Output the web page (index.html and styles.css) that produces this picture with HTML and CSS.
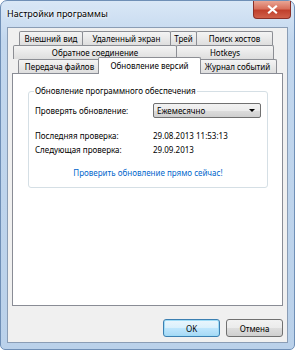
FILE: index.html
```html
<!DOCTYPE html>
<html lang="ru">
<head>
    <meta charset="UTF-8">
    <title>Настройки программы</title>
    <link rel="stylesheet" href="styles.css">
</head>
<body>
    <div class="window">

        <!-- Title bar -->
        <div class="titlebar">
            <span class="title">Настройки программы</span>
            <div class="close-btn">
                <svg width="11" height="9" viewBox="0 0 11 9">
                    <path d="M2 1.5 L9 7.5 M9 1.5 L2 7.5" stroke="#fff" stroke-width="2.2" stroke-linecap="square"/>
                </svg>
            </div>
        </div>

        <div class="client">

            <!-- Tabs -->
            <div class="tabs">
                <div class="tab-row row-1">
                    <div class="tab t-look">Внешний вид</div>
                    <div class="tab t-remote">Удаленный экран</div>
                    <div class="tab t-tray">Трей</div>
                    <div class="tab t-hosts">Поиск хостов</div>
                </div>
                <div class="tab-row row-2">
                    <div class="tab t-back">Обратное соединение</div>
                    <div class="tab t-keys">Hotkeys</div>
                </div>
                <div class="tab-row row-3">
                    <div class="tab t-files">Передача файлов</div>
                    <div class="tab t-update active">Обновление версий</div>
                    <div class="tab t-log">Журнал событий</div>
                </div>
            </div>

            <!-- Tab page -->
            <div class="panel">
                <fieldset class="group">
                    <legend>Обновление программного обеспечения</legend>

                    <div class="field">
                        <span class="label">Проверять обновление:</span>
                        <div class="combo">
                            <span>Ежемесячно</span>
                            <span class="arrow"></span>
                        </div>
                    </div>

                    <div class="field info first">
                        <span class="label">Последняя проверка:</span>
                        <span class="value">29.08.2013 11:53:13</span>
                    </div>
                    <div class="field info">
                        <span class="label">Следующая проверка:</span>
                        <span class="value">29.09.2013</span>
                    </div>

                    <a class="link" href="#">Проверить обновление прямо сейчас!</a>
                </fieldset>
            </div>

            <!-- Dialog buttons -->
            <div class="buttons">
                <button class="btn btn-default">OK</button>
                <button class="btn">Отмена</button>
            </div>

        </div>
    </div>
</body>
</html>
```

FILE: styles.css
```css
/* General */
body {
    margin: 0;
    background: #fff;
    font-family: "Noto Sans", "Open Sans", sans-serif;
    font-size: 8px;
    color: #000;
}

.window {
    box-sizing: border-box;
    width: 295px;
    height: 350px;
    display: flex;
    flex-direction: column;
    padding: 0 6px 6px;
    border: 1px solid #6f8fb6;
    border-radius: 7px 7px 5px 5px;
    background: linear-gradient(#d9e7f6, #c2d7ee 40px, #bad1ea);
}

/* Title bar */
.titlebar {
    height: 26px;
    display: flex;
    justify-content: space-between;
    align-items: flex-start;
    margin-right: -3px;
}

.title {
    margin: 6px 0 0;
    font-size: 9px;
    line-height: 14px;
    text-shadow: 0 0 5px #fff, 0 0 3px #fff;
}

.close-btn {
    width: 38px;
    height: 18px;
    box-sizing: border-box;
    display: flex;
    align-items: center;
    justify-content: center;
    border: 1px solid #8a3028;
    border-top: none;
    border-radius: 0 0 4px 4px;
    background: linear-gradient(#e9a594, #d8705c 45%, #c0402c 55%, #d0604a);
}

/* Client area */
.client {
    flex: 1;
    display: flex;
    flex-direction: column;
    padding: 3px 4px 0;
    border: 1px solid #8a9db5;
    background: #f0f0f0;
}

/* Tabs */
.tab-row {
    display: flex;
    height: 14px;
    align-items: flex-start;
}

.row-1 { margin-left: 7px; }
.row-2 { margin-left: 1px; }
.row-3 { margin-left: 6px; }

.tab {
    box-sizing: border-box;
    height: 14px;
    margin-left: -1px;
    border: 1px solid #8c8e94;
    border-bottom: none;
    border-radius: 2px 2px 0 0;
    background: linear-gradient(#f4f4f4, #e9e9e9 50%, #dedede);
    text-align: center;
    line-height: 13px;
    white-space: nowrap;
}

.tab:first-child { margin-left: 0; }

.tab.active {
    position: relative;
    z-index: 1;
    height: 17px;
    margin: -2px -2px -1px -3px;
    background: #fff;
    line-height: 15px;
}

.t-look   { width: 64px; }
.t-remote { width: 89px; }
.t-tray   { width: 27px; }
.t-hosts  { width: 77px; }
.t-back   { width: 164px; }
.t-keys   { width: 98px; }
.t-files  { width: 83px; }
.t-update { width: 103px; }
.t-log    { width: 79px; }

/* Tab page */
.panel {
    flex: 1;
    border: 1px solid #898c95;
    background: #fff;
}

.group {
    margin: 11px 15px 0;
    padding: 6px 6px 7px;
    border: 1px solid #d5dfe5;
    border-radius: 3px;
}

.group legend {
    padding: 0 1px;
    margin-left: -1px;
    line-height: 12px;
}

.field {
    display: flex;
    align-items: center;
    height: 15px;
}

.field.info { height: 14px; }
.field.first { margin-top: 10px; }

.label {
    width: 118px;
    flex-shrink: 0;
}

.combo {
    box-sizing: border-box;
    width: 108px;
    height: 15px;
    display: flex;
    align-items: center;
    justify-content: space-between;
    padding: 0 5px 0 3px;
    border: 1px solid #707070;
    border-radius: 2px;
    background: linear-gradient(#f2f2f2, #ebebeb 50%, #dddddd 51%, #cfcfcf);
}

.arrow {
    width: 0;
    height: 0;
    border-left: 3px solid transparent;
    border-right: 3px solid transparent;
    border-top: 3px solid #000;
}

.link {
    display: block;
    margin-top: 10px;
    text-align: center;
    line-height: 14px;
    color: #0066cc;
    text-decoration: none;
}

/* Dialog buttons */
.buttons {
    display: flex;
    justify-content: flex-end;
    gap: 6px;
    margin: 13px 0 5px;
}

.btn {
    width: 57px;
    height: 18px;
    padding: 0;
    font-family: inherit;
    font-size: 8px;
    color: #000;
    border: 1px solid #707070;
    border-radius: 3px;
    background: linear-gradient(#f2f2f2, #ebebeb 50%, #dddddd 51%, #cfcfcf);
}

.btn-default {
    border-color: #3c7fb1;
    background: linear-gradient(#eaf6fd, #d9f0fc 50%, #bee6fd 51%, #a7d9f5);
    box-shadow: inset 0 0 0 1px #9fdcf7;
}
```
